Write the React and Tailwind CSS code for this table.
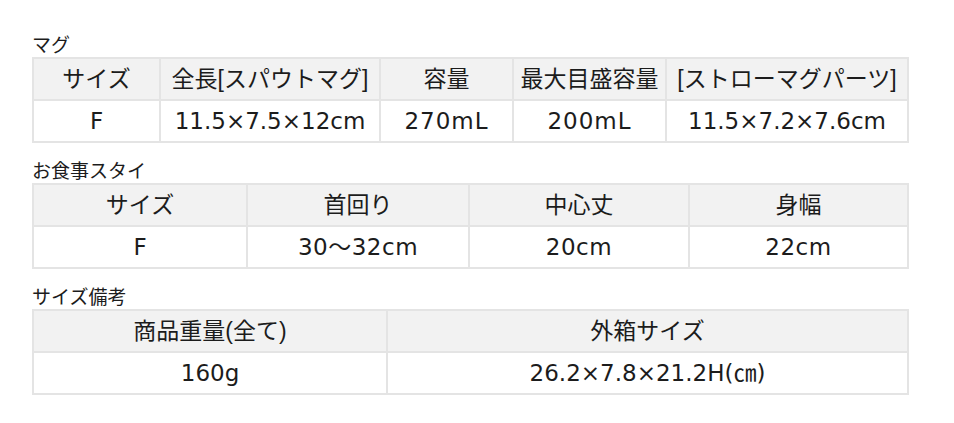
import React from "react";

const FONT = { fontFamily: '"Liberation Sans", "Noto Sans CJK JP", sans-serif' };

function Cell({ children, head, extra = "" }) {
  return (
    <div
      className={`flex h-[40px] items-center justify-center whitespace-nowrap text-[23px] text-[#1c1c1c] ${
        head ? "bg-[#f2f2f2]" : "bg-white font-['DejaVu_Sans','Noto_Sans_CJK_JP',sans-serif]"
      } ${extra}`}
    >
      {children}
    </div>
  );
}

function Section({ label, cols, head, row, extras, mt }) {
  return (
    <div className={mt}>
      <div className="h-[22px] text-[19px] leading-[22px] text-[#1c1c1c]">{label}</div>
      <div className={`grid ${cols} gap-[2px] bg-[#e4e4e4] p-[2px]`}>
        {head.map((h, i) => (
          <Cell key={"h" + i} head>
            {h}
          </Cell>
        ))}
        {row.map((r, i) => (
          <Cell key={"r" + i} extra={extras[i]}>
            {r}
          </Cell>
        ))}
      </div>
    </div>
  );
}

export default function App() {
  return (
    <div className="min-h-[423px] w-[954px] bg-white pl-[32px] pt-[35px]" style={FONT}>
      <div className="w-[877px]">
        <Section
          label="マグ"
          cols="grid-cols-[125px_218px_131px_151px_1fr]"
          head={["サイズ", "全長[スパウトマグ]", "容量", "最大目盛容量", "[ストローマグパーツ]"]}
          row={["F", "11.5×7.5×12cm", "270mL", "200mL", "11.5×7.2×7.6cm"]}
          extras={["", "", "tracking-[1px]", "tracking-[1px]", ""]}
        />
        <Section
          mt="mt-[18px]"
          label="お食事スタイ"
          cols="grid-cols-[212px_220px_218px_1fr]"
          head={["サイズ", "首回り", "中心丈", "身幅"]}
          row={["F", "30〜32cm", "20cm", "22cm"]}
          extras={["", "tracking-[0.5px]", "tracking-[0.5px]", "tracking-[0.5px]"]}
        />
        <Section
          mt="mt-[18px]"
          label="サイズ備考"
          cols="grid-cols-[352px_1fr]"
          head={["商品重量(全て)", "外箱サイズ"]}
          row={["160g", "26.2×7.8×21.2H(㎝)"]}
          extras={["", ""]}
        />
      </div>
    </div>
  );
}
